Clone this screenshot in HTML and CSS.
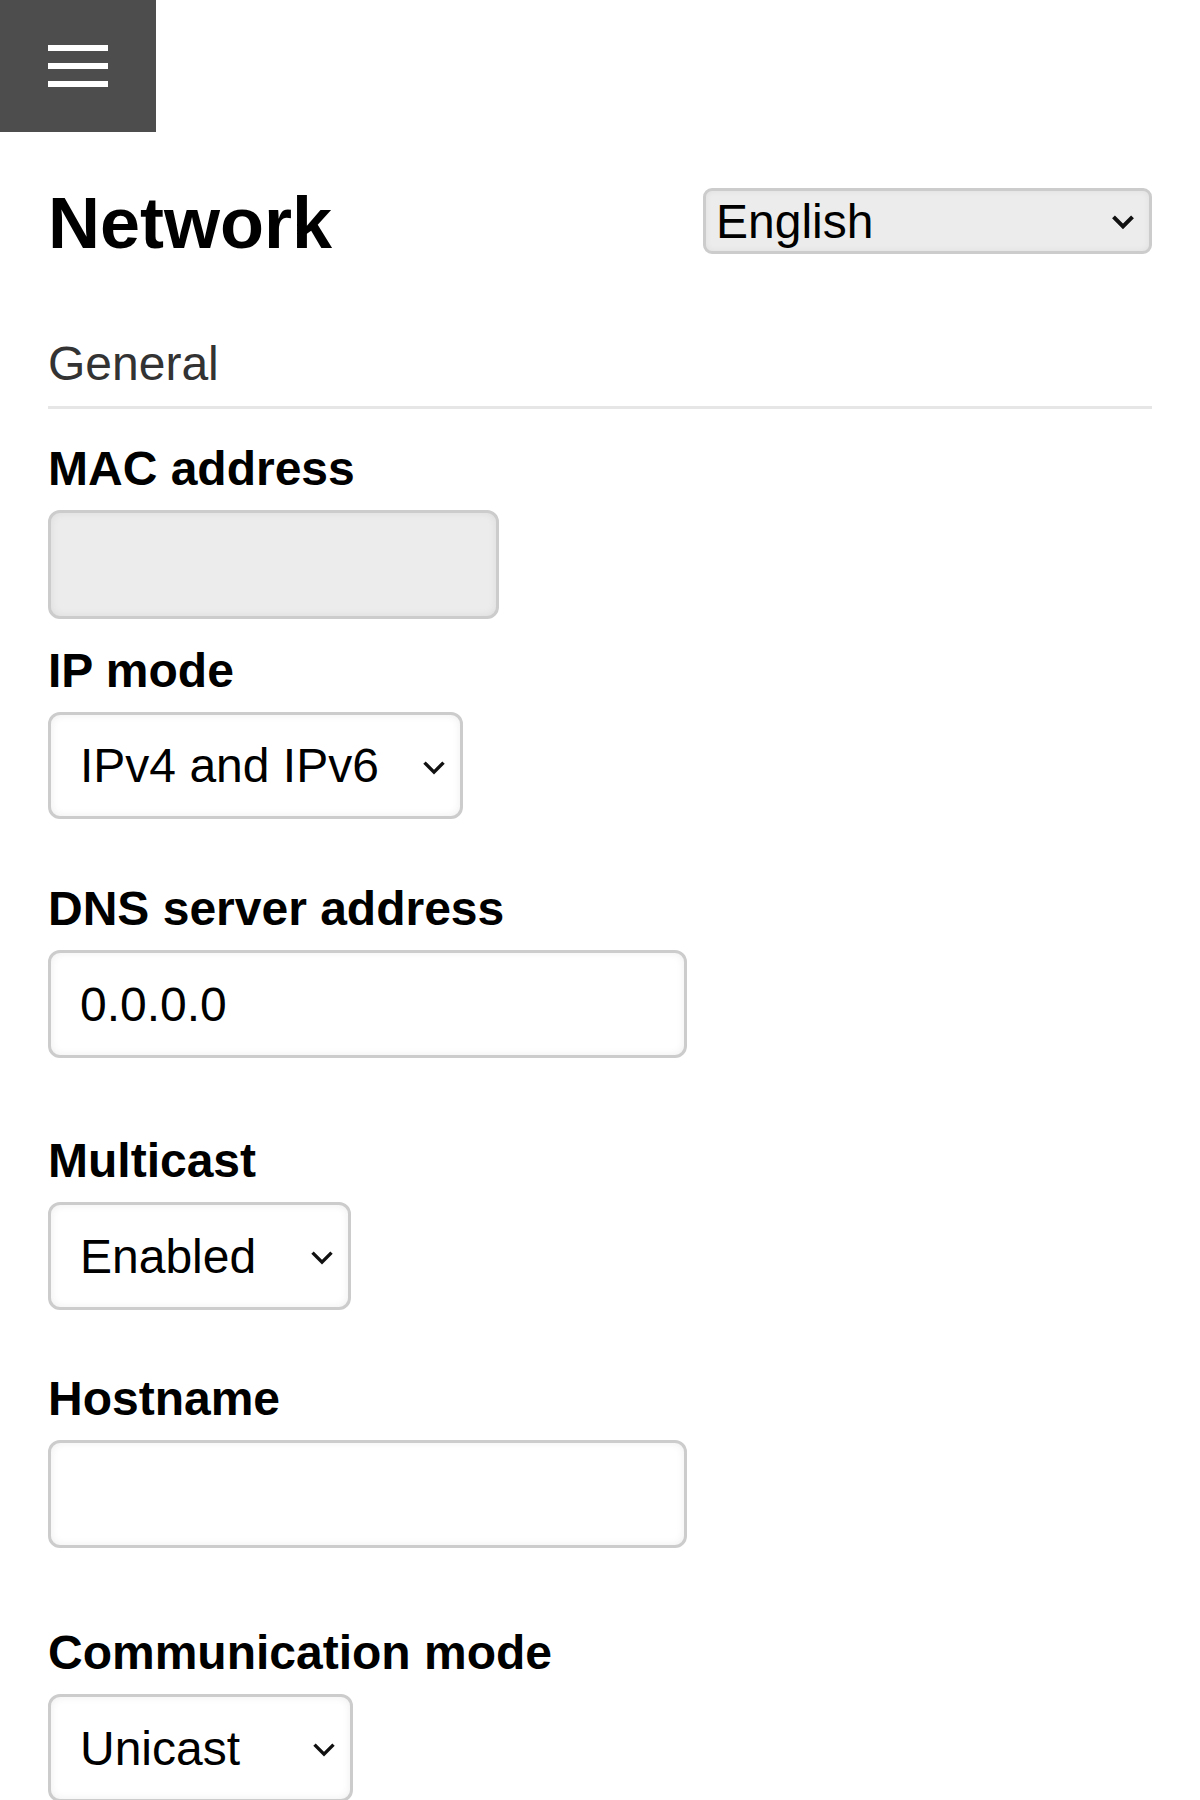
FILE: index.html
```html
<!DOCTYPE html>
<html lang="en">
<head>
<meta charset="utf-8">
<title>Network</title>
<link rel="stylesheet" href="styles.css">
</head>
<body>
<header class="topbar">
  <button class="menu-btn" type="button" aria-label="Menu">
    <span class="bar"></span>
    <span class="bar"></span>
    <span class="bar"></span>
  </button>
</header>
<main class="content">
  <div class="title-row">
    <h1 class="page-title">Network</h1>
    <div class="select-wrap lang-wrap">
      <select class="lang-select">
        <option>English</option>
      </select>
      <svg class="chev chev-bold" viewBox="0 0 24 16" width="24" height="16"><polyline points="2.5,3 12,12.5 21.5,3" fill="none" stroke="#111" stroke-width="4"/></svg>
    </div>
  </div>

  <h2 class="section-title">General</h2>

  <div class="field gap-mac">
    <label class="field-label">MAC address</label>
    <input class="control input-mac" type="text" disabled>
  </div>

  <div class="field gap-ip">
    <label class="field-label">IP mode</label>
    <div class="select-wrap">
      <select class="control sel sel-ip">
        <option>IPv4 and IPv6</option>
        <option>IPv4</option>
        <option>IPv6</option>
      </select>
      <svg class="chev" viewBox="0 0 24 16" width="24" height="16"><polyline points="2.5,3 12,12.5 21.5,3" fill="none" stroke="#111" stroke-width="3.4"/></svg>
    </div>
  </div>

  <div class="field gap-dns">
    <label class="field-label">DNS server address</label>
    <input class="control input-wide" type="text" value="0.0.0.0">
  </div>

  <div class="field gap-mc">
    <label class="field-label">Multicast</label>
    <div class="select-wrap">
      <select class="control sel sel-mc">
        <option>Enabled</option>
        <option>Disabled</option>
      </select>
      <svg class="chev" viewBox="0 0 24 16" width="24" height="16"><polyline points="2.5,3 12,12.5 21.5,3" fill="none" stroke="#111" stroke-width="3.4"/></svg>
    </div>
  </div>

  <div class="field gap-host">
    <label class="field-label">Hostname</label>
    <input class="control input-wide" type="text">
  </div>

  <div class="field">
    <label class="field-label">Communication mode</label>
    <div class="select-wrap">
      <select class="control sel sel-cm">
        <option>Unicast</option>
        <option>Multicast</option>
      </select>
      <svg class="chev" viewBox="0 0 24 16" width="24" height="16"><polyline points="2.5,3 12,12.5 21.5,3" fill="none" stroke="#111" stroke-width="3.4"/></svg>
    </div>
  </div>
</main>
</body>
</html>
```
FILE: styles.css
```css
html, body {
  margin: 0;
  padding: 0;
  background: #ffffff;
}

body {
  font-family: "Liberation Sans", Arial, Helvetica, sans-serif;
  color: #000;
}

.topbar {
  height: 132px;
  display: flex;
}

.menu-btn {
  width: 156px;
  height: 132px;
  margin: 0;
  padding: 45px 48px 0;
  border: 0;
  border-radius: 0;
  background: #4d4d4d;
  display: flex;
  flex-direction: column;
  align-items: flex-start;
  gap: 12px;
  box-sizing: border-box;
}

.bar {
  display: block;
  width: 60px;
  height: 6px;
  background: #ffffff;
}

.content {
  padding: 0 48px;
}

.title-row {
  margin-top: 50px;
  display: flex;
  justify-content: space-between;
  align-items: flex-start;
}

.page-title {
  margin: 0;
  font-size: 72px;
  line-height: 82px;
  font-weight: 700;
}

.select-wrap {
  position: relative;
  width: fit-content;
}

.lang-wrap {
  margin-top: 6px;
}

.lang-select {
  -webkit-appearance: none;
  appearance: none;
  box-sizing: border-box;
  width: 449px;
  height: 66px;
  margin: 0;
  padding: 0 60px 0 10px;
  border: 3px solid #cccccc;
  border-radius: 9px;
  background: #ececec;
  box-shadow: inset 0 0 6px rgba(0, 0, 0, 0.06);
  font-family: "Liberation Sans", Arial, sans-serif;
  font-size: 48px;
  color: #000;
  display: block;
}

.chev {
  position: absolute;
  right: 17px;
  top: 50%;
  transform: translateY(-40%);
  pointer-events: none;
}

.chev-bold {
  transform: translateY(-45%);
}

.section-title {
  margin: 72px 0 0;
  padding-bottom: 15px;
  border-bottom: 3px solid #e6e6e6;
  font-size: 48px;
  line-height: 55px;
  font-weight: 400;
  color: #333333;
}

.field {
  display: flex;
  flex-direction: column;
  align-items: flex-start;
}

.section-title + .field {
  margin-top: 32px;
}

.gap-mac { margin-bottom: 24px; }
.gap-ip { margin-bottom: 62px; }
.gap-dns { margin-bottom: 75px; }
.gap-mc { margin-bottom: 61px; }
.gap-host { margin-bottom: 77px; }

.field-label {
  font-size: 48px;
  line-height: 55px;
  font-weight: 700;
  margin-bottom: 14px;
}

.control {
  box-sizing: border-box;
  height: 108px;
  margin: 0;
  padding: 0 29px;
  border: 3px solid #cccccc;
  border-radius: 12px;
  background: #ffffff;
  box-shadow: inset 0 0 8px rgba(0, 0, 0, 0.07);
  font-family: "Liberation Sans", Arial, sans-serif;
  font-size: 48px;
  color: #000;
  outline: none;
  display: block;
}

.input-mac {
  width: 451px;
  height: 109px;
  background: #ececec;
}

.input-wide {
  width: 639px;
}

.sel {
  -webkit-appearance: none;
  appearance: none;
  padding-right: 79px;
}

.sel-ip { width: 415px; height: 107px; }
.sel-mc { width: 303px; }
.sel-cm { width: 305px; }
```
